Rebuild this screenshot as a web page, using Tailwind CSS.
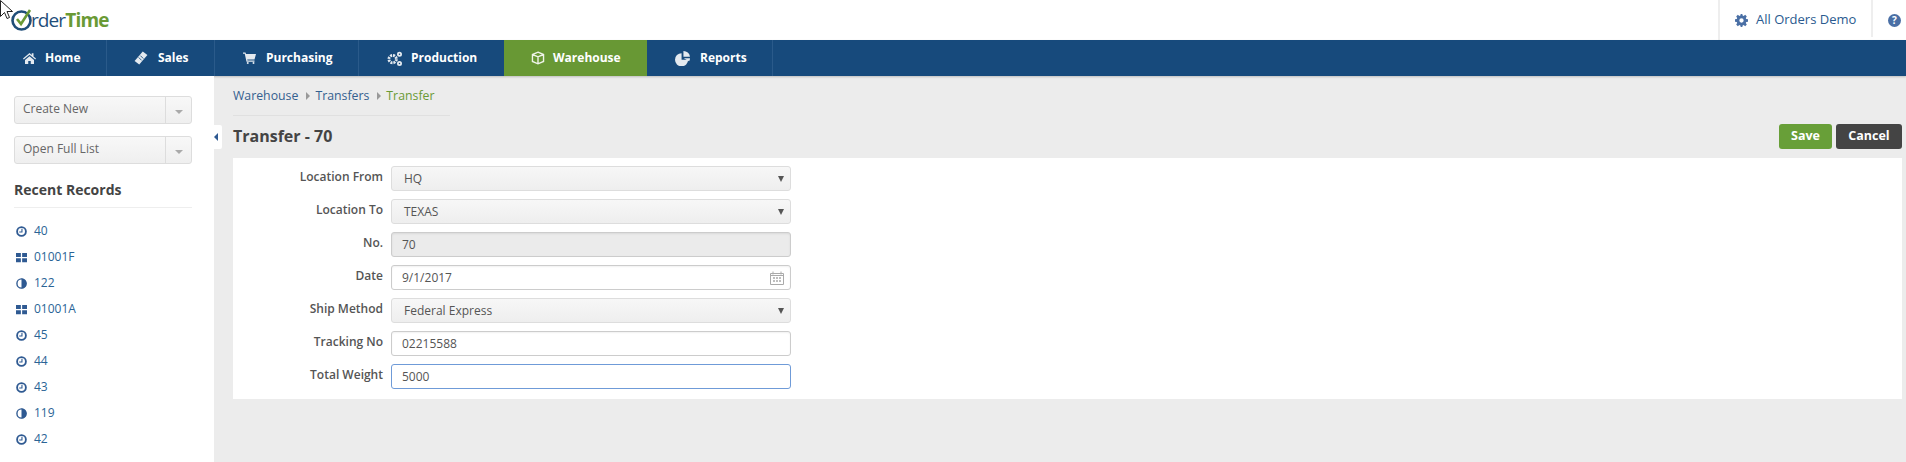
<!DOCTYPE html>
<html lang="en">
<head>
  <meta charset="UTF-8" />
  <title>Transfer - 70 - Order Time</title>
  <script src="https://cdn.jsdelivr.net/npm/@tailwindcss/browser@4"></script>
</head>
<body class="relative h-[462px] overflow-hidden bg-white font-['Open_Sans',sans-serif] text-[12px] text-[#555]">

  <!-- Mouse cursor from the capture -->
  <svg class="absolute left-0 top-0 z-10 h-[19px] w-[13px]" viewBox="0 0 13 19"><path d="M.5.5v16l4-4 2.500 6 2.500-1-2.500-6h5.500z" fill="#fff" stroke="#222"/></svg>

  <!-- Header -->
  <header class="flex h-[40px] items-stretch justify-between">
    <div class="flex items-center pl-[10px]">
      <svg class="h-[22px] w-[23px]" viewBox="0 0 23 22"><circle cx="11.500" cy="11.500" r="9" fill="none" stroke="#1f4e79" stroke-width="2.600"/><path d="M7 10l4 5 9-14" fill="none" stroke="#6a9a35" stroke-width="2.600"/></svg>
      <span class="ml-[-2px] text-[19px] leading-none tracking-[-0.9px] text-[#1f4e79]">rder</span><span class="text-[19px] font-bold leading-none tracking-[-0.8px] text-[#6a9a35]">Time</span>
    </div>
    <div class="flex items-stretch">
      <div class="flex w-[153px] items-center border-l-2 border-[#eee] pl-[15px] text-[13px] text-[#2a5a8f]">
        <svg class="mr-[8px] h-[13px] w-[13px]" viewBox="0 0 24 24" fill="#4a6fa5"><path d="M24 14.100v-4.200l-3.300-.6a9 9 0 0 0-.8-1.900l1.900-2.800-3-3-2.800 1.900a9 9 0 0 0-1.900-.8L13.500 0h-3l-.6 2.700a9 9 0 0 0-1.900.8L5.200 1.600l-3 3 1.900 2.800a9 9 0 0 0-.8 1.900L0 9.900v4.200l3.300.6a9 9 0 0 0 .8 1.900l-1.900 2.800 3 3 2.800-1.900a9 9 0 0 0 1.900.8l.6 2.700h3l.6-2.700a9 9 0 0 0 1.900-.8l2.800 1.900 3-3-1.900-2.800a9 9 0 0 0 .8-1.900zM12 16a4 4 0 1 1 0-8 4 4 0 0 1 0 8z"/></svg>
        All Orders Demo
      </div>
      <div class="mb-[3px] flex w-[35px] items-center border-l-2 border-[#eee] pl-[15px] pt-[3px]">
        <span class="flex h-[13px] w-[13px] items-center justify-center rounded-full bg-[#4a6fa5] text-[10px] font-bold leading-none text-white">?</span>
      </div>
    </div>
  </header>

  <!-- Main nav -->
  <nav class="relative flex h-[36px] bg-[#174a7c] text-[12px] font-bold text-white shadow-[0_1px_2px_rgba(0,0,0,0.2)]">
    <a class="flex w-[107px] items-center border-r border-[#2a5a8a] pl-[23px]">
      <svg class="mr-[9px] h-[12px] w-[13px]" viewBox="0 0 26 24" fill="#e4eaf0"><path d="M13 2 0 13l1.500 2L13 5.500 24.500 15l1.500-2-5-4.200V2.500h-3.500v3.300zM4 16v8h6.500v-6h5v6H22v-8l-9-7.500z"/></svg>Home
    </a>
    <a class="flex w-[108px] items-center border-r border-[#2a5a8a] pl-[27px]">
      <svg class="mr-[10px] h-[14px] w-[14px]" viewBox="0 0 24 24" fill="#e4eaf0"><path d="M15 1l8 6L9 23 1 17z"/><path d="M8 11l5 5M11 8l5 5" stroke="#174a7c" stroke-width="1.500"/></svg>Sales
    </a>
    <a class="flex w-[144px] items-center border-r border-[#2a5a8a] pl-[28px]">
      <svg class="mr-[10px] h-[12px] w-[13px]" viewBox="0 0 26 24" fill="#e4eaf0"><path d="M0 1h5l1 3h20l-3 11H8.500l.5 2h14v2.500H7L3.500 3.500H0z"/><circle cx="9.500" cy="22" r="2"/><circle cx="21" cy="22" r="2"/></svg>Purchasing
    </a>
    <a class="flex w-[145px] items-center pl-[28px]">
      <svg class="mr-[9px] h-[15px] w-[15px]" viewBox="0 0 24 24" fill="none" stroke="#e4eaf0"><circle cx="9" cy="13" r="6" stroke-width="4.500" stroke-dasharray="3.200 1.500"/><circle cx="20" cy="5" r="2.600" stroke-width="2.800"/><circle cx="20" cy="20" r="2.600" stroke-width="2.800"/></svg>Production
    </a>
    <a class="flex w-[143px] items-center bg-[#689834] pl-[27px]">
      <svg class="mr-[8px] h-[14px] w-[14px]" viewBox="0 0 24 24" fill="none" stroke="#eef3e8" stroke-width="2.400"><path d="M12 2l9.500 4v12L12 22l-9.500-4V6zM2.500 6 12 10l9.500-4M12 10v12"/></svg>Warehouse
    </a>
    <a class="flex w-[126px] items-center border-r border-[#2a5a8a] pl-[28px]">
      <svg class="mr-[10px] h-[15px] w-[15px]" viewBox="0 0 24 24" fill="#e4eaf0"><path d="M10.500 3.500v10.500h10.500A10.500 10.500 0 1 1 10.500 3.500z"/><path d="M13.500 0A10.500 10.500 0 0 1 24 9h-10.500zM14 11.500h10q0 3-1.500 5z"/></svg>Reports
    </a>
  </nav>

  <div class="flex h-[386px]">
    <!-- Sidebar -->
    <aside class="relative w-[214px] shrink-0 bg-white pl-[14px] pr-[22px] pt-[20px]">
      <div class="flex h-[28px] items-stretch rounded-[3px] border border-[#ddd] bg-gradient-to-b from-[#f8f8f8] to-[#efefef] text-[#666]">
        <span class="flex-1 pl-[8px] leading-[24px]">Create New</span>
        <span class="flex w-[26px] items-center justify-center border-l border-[#ddd]"><i class="mt-[3px] h-0 w-0 border-x-[4px] border-t-[4px] border-x-transparent border-t-[#aaa]"></i></span>
      </div>
      <div class="mt-[12px] flex h-[28px] items-stretch rounded-[3px] border border-[#ddd] bg-gradient-to-b from-[#f8f8f8] to-[#efefef] text-[#666]">
        <span class="flex-1 pl-[8px] leading-[24px]">Open Full List</span>
        <span class="flex w-[26px] items-center justify-center border-l border-[#ddd]"><i class="mt-[3px] h-0 w-0 border-x-[4px] border-t-[4px] border-x-transparent border-t-[#aaa]"></i></span>
      </div>
      <h3 class="mt-[16px] border-b border-[#eee] pb-[8px] text-[14px] font-bold leading-[19px] text-[#444]">Recent Records</h3>
      <ul class="mt-[10px] text-[#2a6496]">
        <li class="flex h-[26px] items-center"><svg class="mr-[7px] ml-[2px] h-[11px] w-[11px]" viewBox="0 0 12 12" fill="none" stroke="#2f5a92" stroke-width="2"><circle cx="6" cy="6" r="4.800"/><path d="M6.500 3v3.500H3.500" stroke-width="1.200"/></svg>40</li>
        <li class="flex h-[26px] items-center"><svg class="mr-[7px] ml-[2px] h-[11px] w-[11px]" viewBox="0 0 12 12" fill="#2f5a92"><path d="M0 1h5.300v4.500H0zM6.700 1H12v4.500H6.700zM0 6.800h5.300v4.500H0zM6.700 6.800H12v4.500H6.700z"/></svg>01001F</li>
        <li class="flex h-[26px] items-center"><svg class="mr-[7px] ml-[2px] h-[11px] w-[11px]" viewBox="0 0 12 12"><circle cx="6" cy="6" r="5" fill="none" stroke="#2f5a92" stroke-width="1.500"/><path d="M6 .5a5.500 5.500 0 0 1 0 11z" fill="#2f5a92"/></svg>122</li>
        <li class="flex h-[26px] items-center"><svg class="mr-[7px] ml-[2px] h-[11px] w-[11px]" viewBox="0 0 12 12" fill="#2f5a92"><path d="M0 1h5.300v4.500H0zM6.700 1H12v4.500H6.700zM0 6.800h5.300v4.500H0zM6.700 6.800H12v4.500H6.700z"/></svg>01001A</li>
        <li class="flex h-[26px] items-center"><svg class="mr-[7px] ml-[2px] h-[11px] w-[11px]" viewBox="0 0 12 12" fill="none" stroke="#2f5a92" stroke-width="2"><circle cx="6" cy="6" r="4.800"/><path d="M6.500 3v3.500H3.500" stroke-width="1.200"/></svg>45</li>
        <li class="flex h-[26px] items-center"><svg class="mr-[7px] ml-[2px] h-[11px] w-[11px]" viewBox="0 0 12 12" fill="none" stroke="#2f5a92" stroke-width="2"><circle cx="6" cy="6" r="4.800"/><path d="M6.500 3v3.500H3.500" stroke-width="1.200"/></svg>44</li>
        <li class="flex h-[26px] items-center"><svg class="mr-[7px] ml-[2px] h-[11px] w-[11px]" viewBox="0 0 12 12" fill="none" stroke="#2f5a92" stroke-width="2"><circle cx="6" cy="6" r="4.800"/><path d="M6.500 3v3.500H3.500" stroke-width="1.200"/></svg>43</li>
        <li class="flex h-[26px] items-center"><svg class="mr-[7px] ml-[2px] h-[11px] w-[11px]" viewBox="0 0 12 12"><circle cx="6" cy="6" r="5" fill="none" stroke="#2f5a92" stroke-width="1.500"/><path d="M6 .5a5.500 5.500 0 0 1 0 11z" fill="#2f5a92"/></svg>119</li>
        <li class="flex h-[26px] items-center"><svg class="mr-[7px] ml-[2px] h-[11px] w-[11px]" viewBox="0 0 12 12" fill="none" stroke="#2f5a92" stroke-width="2"><circle cx="6" cy="6" r="4.800"/><path d="M6.500 3v3.500H3.500" stroke-width="1.200"/></svg>42</li>
      </ul>
      <!-- Collapse tab -->
      <div class="absolute left-full top-[49px] flex h-[24px] w-[8px] items-center rounded-r-[2px] bg-white">
        <i class="h-0 w-0 border-y-[4px] border-r-[4px] border-y-transparent border-r-[#2f5a92]"></i>
      </div>
    </aside>

    <!-- Content -->
    <main class="min-w-0 flex-1 bg-[#ececec] pl-[19px] pr-[4px]">
      <div class="flex h-[40px] w-[217px] items-center border-b border-[#e0e0e0] pt-[1px] text-[12.300px] whitespace-nowrap">
        <span class="text-[#34608f]">Warehouse</span>
        <i class="ml-[8px] mr-[5px] h-0 w-0 border-y-[4px] border-l-[4px] border-y-transparent border-l-[#999]"></i>
        <span class="text-[#34608f]">Transfers</span>
        <i class="ml-[8px] mr-[5px] h-0 w-0 border-y-[4px] border-l-[4px] border-y-transparent border-l-[#999]"></i>
        <span class="text-[#6a9a35]">Transfer</span>
      </div>
      <div class="flex h-[42px] items-center justify-between pt-[1px]">
        <h1 class="mt-[-4px] text-[16px] font-bold text-[#444]">Transfer - 70</h1>
        <div class="mt-[-2px] flex gap-[4px] text-[12.500px] font-bold text-white">
          <button class="h-[25px] w-[53px] rounded-[3px] bg-[#689f38]">Save</button>
          <button class="h-[25px] w-[66px] rounded-[3px] bg-[#444]">Cancel</button>
        </div>
      </div>

      <!-- Transfer form -->
      <form class="h-[241px] bg-white pt-[8px]">
        <div class="grid grid-cols-[150px_400px] gap-x-[8px] gap-y-[8px] text-[12px]">
          <label class="h-[25px] text-right font-semibold leading-[22px] text-[#555]">Location From</label>
          <div class="flex h-[25px] items-center justify-between rounded-[3px] border border-[#ddd] bg-gradient-to-b from-[#f7f7f7] to-[#eee] pl-[12px] pr-[6px]">HQ<i class="h-0 w-0 border-x-[3.500px] border-t-[6px] border-x-transparent border-t-[#555]"></i></div>
          <label class="h-[25px] text-right font-semibold leading-[22px] text-[#555]">Location To</label>
          <div class="flex h-[25px] items-center justify-between rounded-[3px] border border-[#ddd] bg-gradient-to-b from-[#f7f7f7] to-[#eee] pl-[12px] pr-[6px]">TEXAS<i class="h-0 w-0 border-x-[3.500px] border-t-[6px] border-x-transparent border-t-[#555]"></i></div>
          <label class="h-[25px] text-right font-semibold leading-[22px] text-[#555]">No.</label>
          <div class="flex h-[25px] items-center rounded-[3px] border border-[#ccc] bg-[#ebebeb] pl-[10px] shadow-[inset_0_1px_2px_rgba(0,0,0,0.08)]">70</div>
          <label class="h-[25px] text-right font-semibold leading-[22px] text-[#555]">Date</label>
          <div class="flex h-[25px] items-center justify-between rounded-[3px] border border-[#ccc] bg-white pl-[10px] pr-[6px] shadow-[inset_0_1px_2px_rgba(0,0,0,0.06)]">9/1/2017
            <svg class="h-[14px] w-[14px]" viewBox="0 0 14 14" fill="none" stroke="#aaa"><path d="M.5 2.500h13v11H.5z"/><path d="M3 .5v3M11 .5v3M.5 4.500h13" /><path d="M3 7h2M6 7h2M9 7h2M3 10h2M6 10h2M9 10h2" stroke-width="1.500"/></svg>
          </div>
          <label class="h-[25px] text-right font-semibold leading-[22px] text-[#555]">Ship Method</label>
          <div class="flex h-[25px] items-center justify-between rounded-[3px] border border-[#ddd] bg-gradient-to-b from-[#f7f7f7] to-[#eee] pl-[12px] pr-[6px]">Federal Express<i class="h-0 w-0 border-x-[3.500px] border-t-[6px] border-x-transparent border-t-[#555]"></i></div>
          <label class="h-[25px] text-right font-semibold leading-[22px] text-[#555]">Tracking No</label>
          <div class="flex h-[25px] items-center rounded-[3px] border border-[#ccc] bg-white pl-[10px] shadow-[inset_0_1px_2px_rgba(0,0,0,0.06)]">02215588</div>
          <label class="h-[25px] text-right font-semibold leading-[22px] text-[#555]">Total Weight</label>
          <div class="flex h-[25px] items-center rounded-[3px] border border-[#6f9bd8] bg-white pl-[10px]">5000</div>
        </div>
      </form>
    </main>
  </div>
</body>
</html>
